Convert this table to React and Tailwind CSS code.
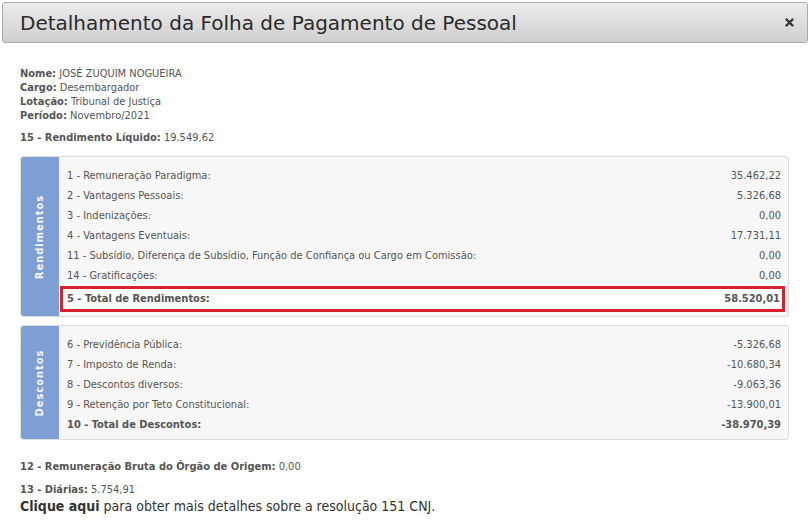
import React from 'react';

const rendimentos = [
  ['1 - Remuneração Paradigma:', '35.462,22'],
  ['2 - Vantagens Pessoais:', '5.326,68'],
  ['3 - Indenizações:', '0,00'],
  ['4 - Vantagens Eventuais:', '17.731,11'],
  ['11 - Subsídio, Diferença de Subsídio, Função de Confiança ou Cargo em Comissão:', '0,00'],
  ['14 - Gratificações:', '0,00'],
];

const descontos = [
  ['6 - Previdência Pública:', '-5.326,68'],
  ['7 - Imposto de Renda:', '-10.680,34'],
  ['8 - Descontos diversos:', '-9.063,36'],
  ['9 - Retenção por Teto Constitucional:', '-13.900,01'],
];

function Row({ label, value, bold }) {
  return (
    <div className="flex justify-between items-center h-5">
      <span className={bold ? 'font-semibold' : ''}>{label}</span>
      <span className={bold ? 'font-semibold' : ''}>{value}</span>
    </div>
  );
}

function Panel({ title, children }) {
  return (
    <div className="flex mr-[21px] rounded-[3px] border border-[#dcdcdc] bg-[#f7f7f7]">
      <div className="w-[38px] shrink-0 bg-[#7d9fd3] rounded-l-[3px] flex items-center justify-center">
        <span className="-rotate-90 whitespace-nowrap text-[#f4f7fc] font-bold text-[11px] tracking-[1px]">{title}</span>
      </div>
      <div className="flex-1 pl-[8px] pr-[7px] pt-[9px] pb-[4px]">{children}</div>
    </div>
  );
}

export default function App() {
  return (
    <div className="w-[810px] h-[527px] bg-white overflow-hidden text-[#555] text-[11px] leading-[14px]" style={{ fontFamily: '"DejaVu Sans Condensed", Tahoma, sans-serif' }}>
      <div className="mx-[2px] mt-[2px] h-[41px] rounded-[3px] border border-[#aaa] bg-gradient-to-b from-[#ececec] to-[#cfcfcf] flex items-center justify-between pl-[17px] pr-[12px]">
        <h1 className="text-[20px] text-[#2a2a2a] leading-none" style={{ fontFamily: '"DejaVu Sans", Verdana, sans-serif' }}>Detalhamento da Folha de Pagamento de Pessoal</h1>
        <svg width="9" height="9" viewBox="0 0 9 9" className="mr-[1px]">
          <path d="M1.5 1.5 L7.5 7.5 M7.5 1.5 L1.5 7.5" stroke="#333" strokeWidth="2.4" strokeLinecap="round" />
        </svg>
      </div>

      <div className="pl-[20px] pt-[24px]">
        <div><b className="font-semibold">Nome:</b> JOSÉ ZUQUIM NOGUEIRA</div>
        <div><b className="font-semibold">Cargo:</b> Desembargador</div>
        <div><b className="font-semibold">Lotação:</b> Tribunal de Justiça</div>
        <div><b className="font-semibold">Período:</b> Novembro/2021</div>
        <div className="mt-[8px]"><b className="font-semibold">15 - Rendimento Líquido:</b> 19.549,62</div>

        <div className="mt-[11px]">
          <Panel title="Rendimentos">
            {rendimentos.map(([l, v]) => (
              <Row key={l} label={l} value={v} />
            ))}
            <div className="-ml-[7px] -mr-[4px] border-[3px] border-[#d9202c] bg-white pl-[4px] pr-[2px]">
              <Row label="5 - Total de Rendimentos:" value="58.520,01" bold />
            </div>
          </Panel>
        </div>

        <div className="mt-[8px]">
          <Panel title="Descontos">
            {descontos.map(([l, v]) => (
              <Row key={l} label={l} value={v} />
            ))}
            <Row label="10 - Total de Descontos:" value="-38.970,39" bold />
          </Panel>
        </div>

        <div className="mt-[20px]"><b className="font-semibold">12 - Remuneração Bruta do Órgão de Origem:</b> 0,00</div>
        <div className="mt-[9px]"><b className="font-semibold">13 - Diárias:</b> 5.754,91</div>
        <div className="text-[14px] leading-[18px] text-[#333]"><b>Clique aqui</b> para obter mais detalhes sobre a resolução 151 CNJ.</div>
      </div>
    </div>
  );
}
